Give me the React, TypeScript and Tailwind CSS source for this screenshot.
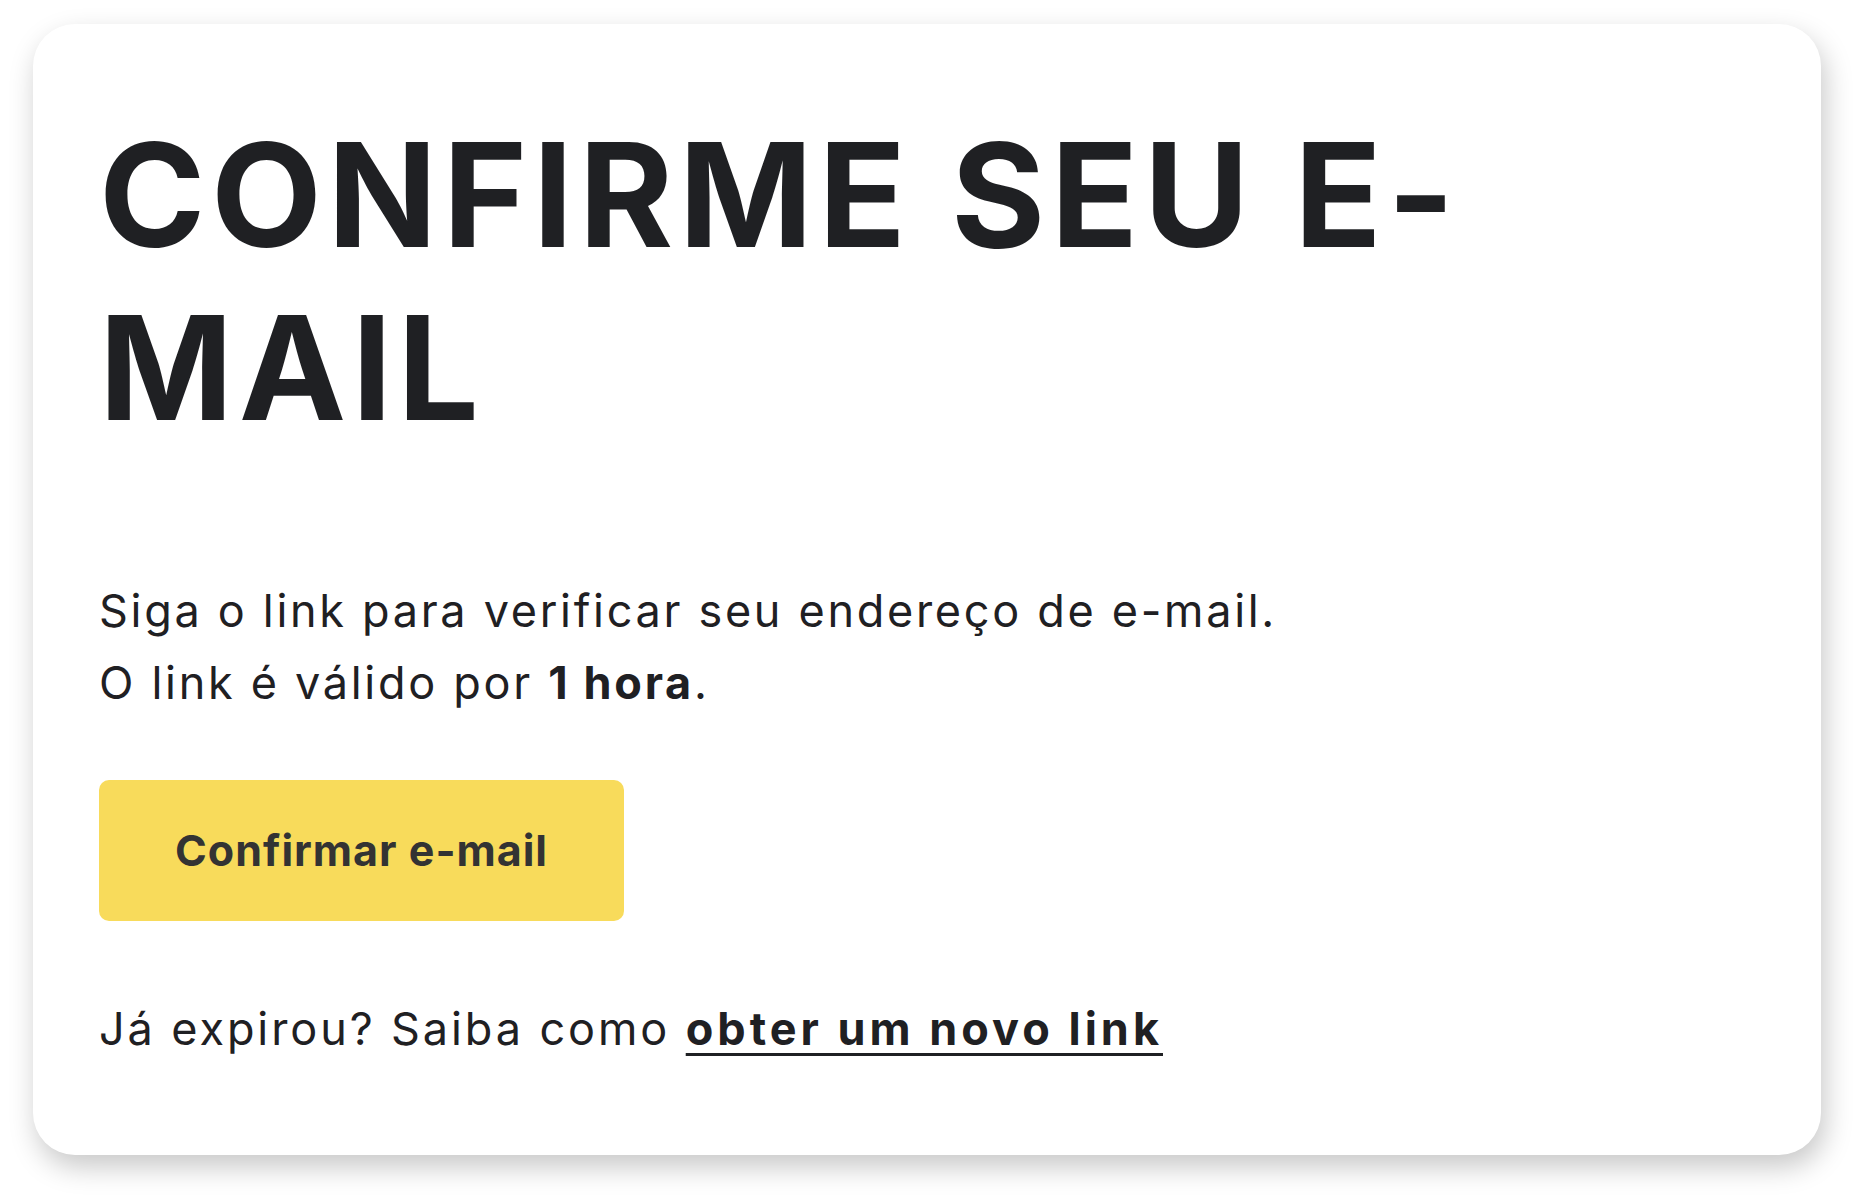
const App = () => {
  return (
    <div className="min-h-screen bg-white pl-[33px] pt-[24px] pr-[39px] pb-[48px]">
      <div className="h-[1131px] w-[1788px] rounded-[42px] bg-white pl-[66px] pt-[85px] shadow-[4px_12px_28px_rgba(0,0,0,0.22)] font-['Inter','Liberation_Sans',sans-serif] text-[#1f2023]">
        <h1 className="text-[144px] font-bold leading-[1.2] tracking-[5.5px]">
          CONFIRME SEU E-
          <br />
          MAIL
        </h1>

        <p className="mt-[120px] text-[45px] leading-[72px] tracking-[2.7px]">
          Siga o link para verificar seu endereço de e-mail.
          <br />
          O link é válido por <strong className="font-bold">1 hora</strong>.
        </p>

        <button className="mt-[61px] flex h-[141px] w-[525px] items-center justify-center rounded-[10px] bg-[#f8db5b] text-[43px] font-bold tracking-[1px] text-[#333333]">
          Confirmar e-mail
        </button>

        <p className="mt-[72px] text-[45px] leading-[72px] tracking-[2.9px]">
          Já expirou? Saiba como{' '}
          <a href="#" className="font-bold tracking-[4px] underline decoration-[3px] underline-offset-[8px]">
            obter um novo link
          </a>
        </p>
      </div>
    </div>
  );
};

export default App;
